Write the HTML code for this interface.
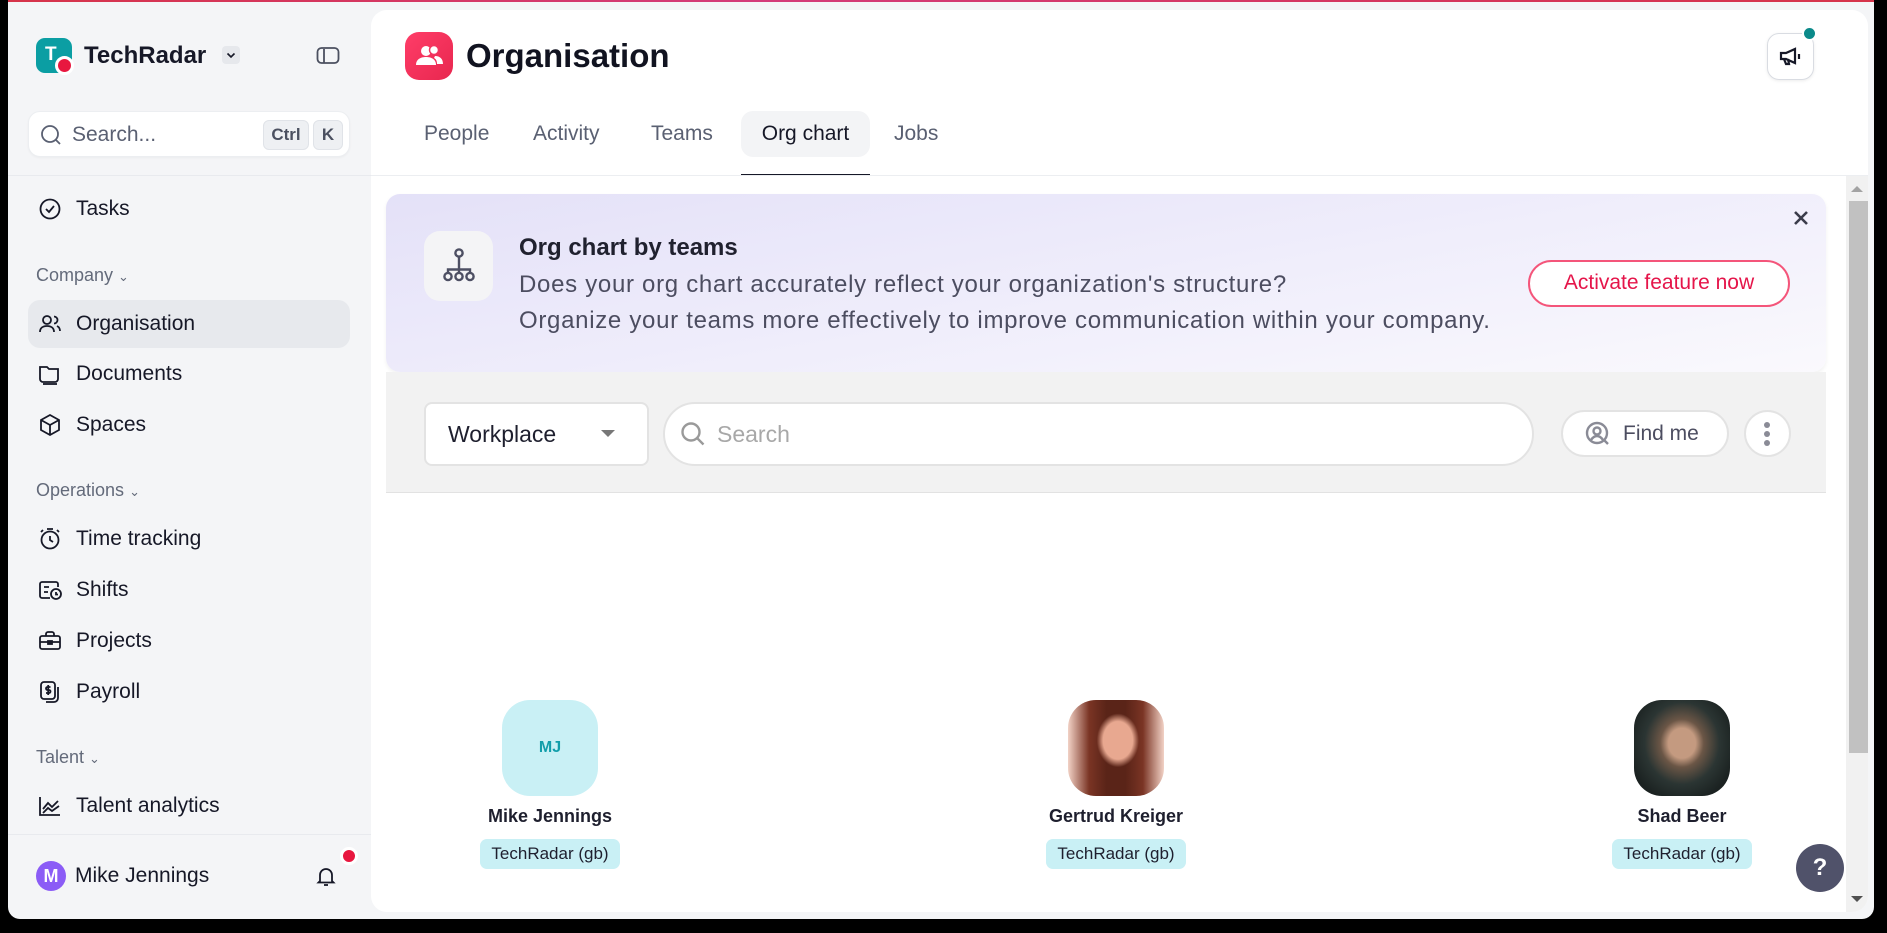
<!DOCTYPE html>
<html><head><meta charset="utf-8"><style>
*{box-sizing:border-box;margin:0;padding:0}
body{width:1887px;height:933px;overflow:hidden;background:#000;font-family:"Liberation Sans",sans-serif;color:#161827;position:relative}
.win{position:absolute;left:8px;top:0;width:1866px;height:919px;background:#f4f5f7;border-radius:0 0 12px 12px;overflow:hidden}
.topline{position:absolute;left:0;top:0;right:0;height:2px;background:linear-gradient(90deg,#d6344a,#d43a7a 40%,#d6344a)}
.abs{position:absolute}
.side{position:absolute;left:0;top:0;width:363px;height:919px}
.nav{position:absolute;left:20px;width:322px;height:48px;display:flex;align-items:center;font-size:21px;color:#161827}
.nav svg{position:absolute;left:10px;top:12px}
.nav span{position:absolute;left:48px}
.sec{position:absolute;left:28px;font-size:18px;color:#636a7a}
.main{position:absolute;left:363px;top:10px;width:1497px;height:902px;background:#fff;border-radius:16px;overflow:hidden}
.tab{position:absolute;top:101px;height:46px;line-height:46px;font-size:21px;color:#5a6072;padding:0 16px}
.card{position:absolute;width:200px;text-align:center}
.av{width:96px;height:96px;border-radius:28px;margin:0 auto}
.nm{font-size:18px;font-weight:bold;margin-top:10px;color:#1e1f2e}
.tg{display:inline-block;margin-top:12px;background:#c9f0f5;border-radius:7px;padding:5px 11px;font-size:17px;color:#1e1f2e}
</style></head><body>
<div class="win">
<div class="topline"></div>
<div class="side">
 <div class="abs" style="left:28px;top:38px;width:36px;height:35px;border-radius:9px;background:#0b9ea3;color:#fff;font-size:19px;font-weight:bold;line-height:33px;padding-left:9px">T</div>
 <div class="abs" style="left:47px;top:56px;width:19px;height:19px;border-radius:50%;background:#e8173f;border:3px solid #fff"></div>
 <div class="abs" style="left:76px;top:42px;font-size:24px;font-weight:bold;color:#161827">TechRadar</div>
 <div class="abs" style="left:214px;top:46px;width:18px;height:18px;background:#e6e8ec;border-radius:4px"><svg width="18" height="18" viewBox="0 0 18 18"><path d="M5.5 7.5l3.5 3.5 3.5-3.5" stroke="#161827" stroke-width="1.6" fill="none"/></svg></div>
 <svg class="abs" style="left:308px;top:46px" width="24" height="20" viewBox="0 0 24 20"><rect x="1.5" y="2" width="21" height="15" rx="4" stroke="#4b5060" stroke-width="1.8" fill="none"/><path d="M8 3v14" stroke="#4b5060" stroke-width="1.8"/></svg>
 <div class="abs" style="left:20px;top:111px;width:322px;height:46px;background:#fff;border:1px solid #eceef1;border-radius:12px;box-shadow:0 1px 2px rgba(0,0,0,.04)">
  <svg class="abs" style="left:11px;top:12px" width="22" height="22" viewBox="0 0 22 22"><circle cx="10" cy="10" r="8" stroke="#5a6072" stroke-width="1.8" fill="none"/><path d="M16 16l4 4" stroke="#5a6072" stroke-width="1.8"/></svg>
  <span class="abs" style="left:43px;top:11px;font-size:21px;color:#5a6072">Search...</span>
  <span class="abs" style="left:234px;top:8px;width:46px;height:30px;background:#eef0f3;border:1px solid #e0e3e8;border-radius:6px;font-size:17px;font-weight:bold;color:#4b5060;text-align:center;line-height:28px">Ctrl</span>
  <span class="abs" style="left:284px;top:8px;width:30px;height:30px;background:#eef0f3;border:1px solid #e0e3e8;border-radius:6px;font-size:17px;font-weight:bold;color:#4b5060;text-align:center;line-height:28px">K</span>
 </div>
 <div class="abs" style="left:0;top:175px;width:363px;height:1px;background:#e8eaee"></div>
 <div class="nav" style="top:185px"><svg width="24" height="24" viewBox="0 0 24 24" fill="none" stroke="#161827" stroke-width="1.8"><circle cx="12" cy="12" r="9.5"/><path d="M8 12l3 3 5-6"/></svg><span>Tasks</span></div>
 <div class="sec" style="top:265px">Company <span style="font-size:13px">&#8964;</span></div>
 <div class="nav" style="top:300px;background:#e7e9ed;border-radius:12px"><svg width="24" height="24" viewBox="0 0 24 24" fill="none" stroke="#161827" stroke-width="1.8"><circle cx="9" cy="8" r="4"/><path d="M2 20c0-4 3-6 7-6s7 2 7 6"/><path d="M16 4.5a3.5 3.5 0 010 7M19 14c2 1 3 3 3 5"/></svg><span>Organisation</span></div>
 <div class="nav" style="top:350px"><svg width="24" height="24" viewBox="0 0 24 24" fill="none" stroke="#161827" stroke-width="1.8"><path d="M2 5h7l2 2h9v10a3 3 0 01-3 3H5a3 3 0 01-3-3z"/><path d="M5 22h14"/></svg><span>Documents</span></div>
 <div class="nav" style="top:401px"><svg width="24" height="24" viewBox="0 0 24 24" fill="none" stroke="#161827" stroke-width="1.8"><path d="M12 2l9 5v10l-9 5-9-5V7z"/><path d="M3 7l9 5 9-5M12 12v10"/></svg><span>Spaces</span></div>
 <div class="sec" style="top:480px">Operations <span style="font-size:13px">&#8964;</span></div>
 <div class="nav" style="top:515px"><svg width="24" height="24" viewBox="0 0 24 24" fill="none" stroke="#161827" stroke-width="1.8"><circle cx="12" cy="13" r="8.5"/><path d="M12 9v4l3 2M9 2h6M3 5l2-2M21 5l-2-2"/></svg><span>Time tracking</span></div>
 <div class="nav" style="top:566px"><svg width="26" height="24" viewBox="0 0 26 24" fill="none" stroke="#161827" stroke-width="1.8"><path d="M12 20H4a2 2 0 01-2-2V6a2 2 0 012-2h14a2 2 0 012 2v3"/><path d="M6 9h5M6 14h4"/><circle cx="18" cy="16" r="5"/><path d="M18 14v2.5h2"/></svg><span>Shifts</span></div>
 <div class="nav" style="top:617px"><svg width="24" height="24" viewBox="0 0 24 24" fill="none" stroke="#161827" stroke-width="1.8"><rect x="2" y="7" width="20" height="13" rx="2"/><path d="M8 7V5a2 2 0 012-2h4a2 2 0 012 2v2M2 13h20"/><rect x="10" y="12" width="4" height="3" fill="#161827"/></svg><span>Projects</span></div>
 <div class="nav" style="top:668px"><svg width="24" height="24" viewBox="0 0 24 24" fill="none" stroke="#161827" stroke-width="1.8"><rect x="3" y="2" width="14" height="17" rx="3"/><path d="M20 7v11a4 4 0 01-4 4H8"/><path d="M12.5 7h-3a1.5 1.5 0 000 3h1.5a1.5 1.5 0 010 3H8M10.2 5v10"/></svg><span>Payroll</span></div>
 <div class="sec" style="top:747px">Talent <span style="font-size:13px">&#8964;</span></div>
 <div class="nav" style="top:782px"><svg width="24" height="24" viewBox="0 0 24 24" fill="none" stroke="#161827" stroke-width="1.8"><path d="M2 3v18h20"/><path d="M5 15l5-6 4 4 6-6M5 19l5-5 4 3 7-5"/></svg><span>Talent analytics</span></div>
 <div class="abs" style="left:0;top:834px;width:363px;height:1px;background:#e8eaee"></div>
 <div class="abs" style="left:28px;top:861px;width:30px;height:30px;border-radius:50%;background:#8b5cf6;color:#fff;font-weight:bold;font-size:18px;text-align:center;line-height:30px">M</div>
 <div class="abs" style="left:67px;top:864px;font-size:21px;color:#161827">Mike Jennings</div>
 <svg class="abs" style="left:306px;top:864px" width="24" height="24" viewBox="0 0 24 24" fill="none" stroke="#161827" stroke-width="1.8"><path d="M6 17V11a6 6 0 0112 0v6l1.5 1.5h-15z"/><path d="M10 21h4"/></svg>
 <div class="abs" style="left:332px;top:847px;width:18px;height:18px;border-radius:50%;background:#e8173f;border:3px solid #fff"></div>
</div>
<div class="main">
 <div class="abs" style="left:34px;top:22px;width:48px;height:48px;border-radius:14px;background:linear-gradient(135deg,#ff3d68,#e8274f)"><svg width="48" height="48" viewBox="0 0 48 48" fill="#fff"><circle cx="21" cy="19" r="5"/><path d="M11 33c0-6 5-8 10-8s10 2 10 8z"/><circle cx="29" cy="18" r="4.5" stroke="#f23560" stroke-width="1.5"/><path d="M30 24c5 0 8 3 8 8h-6c0-3-1-5-3-6z"/></svg></div>
 <div class="abs" style="left:95px;top:27px;font-size:33px;font-weight:bold;color:#111320">Organisation</div>
 <div class="abs" style="left:1396px;top:23px;width:47px;height:47px;border:1.5px solid #d9dce2;border-radius:12px;box-shadow:0 1px 3px rgba(0,0,0,.08)"><svg class="abs" style="left:10px;top:11px" width="26" height="24" viewBox="0 0 26 24" fill="none" stroke="#161827" stroke-width="2.2"><path d="M3 8h5l9-4v14l-9-4H3z"/><path d="M6 14l2 5h3l-1-5M21 9v5"/></svg></div>
 <div class="abs" style="left:1431px;top:16px;width:15px;height:15px;border-radius:50%;background:#0b8a8a;border:2px solid #fff"></div>
 <div class="tab" style="left:37px">People</div>
 <div class="tab" style="left:146px">Activity</div>
 <div class="tab" style="left:264px">Teams</div>
 <div class="tab" style="left:370px;width:129px;background:#f3f4f6;border-radius:12px;color:#161827;text-align:center;padding:0">Org chart</div>
 <div class="abs" style="left:370px;top:164px;width:129px;height:2px;background:#161827"></div>
 <div class="tab" style="left:507px">Jobs</div>
 <div class="abs" style="left:0;top:165px;width:1497px;height:1px;background:#eceef1"></div>
 <div class="abs" style="left:1475px;top:166px;width:22px;height:736px;background:#f1f1f1"></div>
 <div class="abs" style="left:1478px;top:191px;width:19px;height:552px;background:#c1c1c1"></div>
 <div class="abs" style="left:1480px;top:176px;width:0;height:0;border:6px solid transparent;border-bottom-color:#a3a3a3;border-top:0"></div>
 <div class="abs" style="left:1480px;top:886px;width:0;height:0;border:6px solid transparent;border-top-color:#505050;border-bottom:0"></div>
 <div class="abs" style="left:15px;top:184px;width:1440px;height:178px;border-radius:14px;background:linear-gradient(170deg,#e4e1f8 0%,#efedfb 50%,#faf9fd 100%);box-shadow:0 2px 4px rgba(0,0,0,.06)">
  <div class="abs" style="left:38px;top:37px;width:69px;height:70px;border-radius:16px;background:#f4f4f6"><svg class="abs" style="left:14px;top:14px" width="42" height="42" viewBox="0 0 42 42" fill="none" stroke="#4d4f63" stroke-width="2.4"><circle cx="21" cy="8" r="3.6"/><path d="M21 11.6v13M10 28v-3.5h22V28M21 24.5V28"/><circle cx="10" cy="31.5" r="3.6"/><circle cx="21" cy="31.5" r="3.6"/><circle cx="32" cy="31.5" r="3.6"/></svg></div>
  <div class="abs" style="left:133px;top:40px;font-size:24px;font-weight:bold;color:#20212f">Org chart by teams</div>
  <div class="abs" style="left:133px;top:73px;font-size:24px;color:#4c4d60;letter-spacing:.7px;line-height:36px;white-space:nowrap">Does your org chart accurately reflect your organization's structure?<br>Organize your teams more effectively to improve communication within your company.</div>
  <div class="abs" style="left:1142px;top:66px;width:262px;height:47px;border:2.5px solid #f4557a;border-radius:24px;background:#fff;color:#e5154a;font-size:21px;text-align:center;line-height:42px">Activate feature now</div>
  <svg class="abs" style="left:1407px;top:16px" width="16" height="16" viewBox="0 0 16 16" stroke="#3a3b4a" stroke-width="2.6"><path d="M2 2l12 12M14 2L2 14"/></svg>
 </div>
 <div class="abs" style="left:15px;top:362px;width:1440px;height:121px;background:#f2f2f2;border-bottom:1.5px solid #e2e2e2"></div>
 <div class="abs" style="left:53px;top:392px;width:225px;height:64px;background:#fff;border:2px solid #e3e3e3;border-radius:8px"><span class="abs" style="left:22px;top:17px;font-size:23px;color:#1e1f2e">Workplace</span><div class="abs" style="left:175px;top:26px;border:7px solid transparent;border-top:7px solid #777;border-bottom:0"></div></div>
 <div class="abs" style="left:292px;top:392px;width:871px;height:64px;background:#fff;border:2.5px solid #e3e3e3;border-radius:32px"><svg class="abs" style="left:15px;top:17px" width="26" height="26" viewBox="0 0 26 26" fill="none" stroke="#9a9a9a" stroke-width="2.4"><circle cx="11" cy="11" r="8.5"/><path d="M17.5 17.5l6 6"/></svg><span class="abs" style="left:52px;top:17px;font-size:23px;color:#a8a8a8">Search</span></div>
 <div class="abs" style="left:1190px;top:400px;width:168px;height:47px;background:#fff;border:2.5px solid #e3e3e3;border-radius:24px"><svg class="abs" style="left:22px;top:9px" width="26" height="26" viewBox="0 0 26 26" fill="none" stroke="#8a8b96" stroke-width="2.4"><circle cx="12" cy="12" r="10"/><circle cx="12" cy="10" r="3.5"/><path d="M6 19c2-3 4-4 6-4s4 1 6 4M19 19l4 4"/></svg><span class="abs" style="left:60px;top:10px;font-size:21px;color:#4c4d60">Find me</span></div>
 <div class="abs" style="left:1373px;top:400px;width:47px;height:47px;background:#fff;border:2.5px solid #e3e3e3;border-radius:50%"><svg class="abs" style="left:17px;top:9px" width="8" height="26" viewBox="0 0 8 26" fill="#8a8b96"><circle cx="4" cy="4" r="3"/><circle cx="4" cy="13" r="3"/><circle cx="4" cy="22" r="3"/></svg></div>
 <div class="card" style="left:79px;top:690px"><div class="av" style="background:#c9f0f5;color:#129eaa;font-weight:bold;font-size:16px;line-height:96px">MJ</div><div class="nm">Mike Jennings</div><div class="tg">TechRadar (gb)</div></div>
 <div class="card" style="left:645px;top:690px"><div class="av" style="background:radial-gradient(ellipse 22% 28% at 52% 42%,#e8a890 0 70%,transparent 100%),linear-gradient(90deg,#f2d2c6 0,#7a3424 22%,#5a2418 40%,#5a2418 60%,#7a3424 78%,#f2d2c6 100%);"></div><div class="nm">Gertrud Kreiger</div><div class="tg">TechRadar (gb)</div></div>
 <div class="card" style="left:1211px;top:690px"><div class="av" style="background:radial-gradient(ellipse at 50% 45%,#c49a80 0 20%,#6b5646 32%,#2b3533 55%,#1b2221 80%)"></div><div class="nm">Shad Beer</div><div class="tg">TechRadar (gb)</div></div>
 <div class="abs" style="left:1425px;top:834px;width:48px;height:48px;border-radius:50%;background:#50526a;color:#fff;font-weight:bold;font-size:24px;text-align:center;line-height:48px">?</div>
</div>
</div>
</body></html>
